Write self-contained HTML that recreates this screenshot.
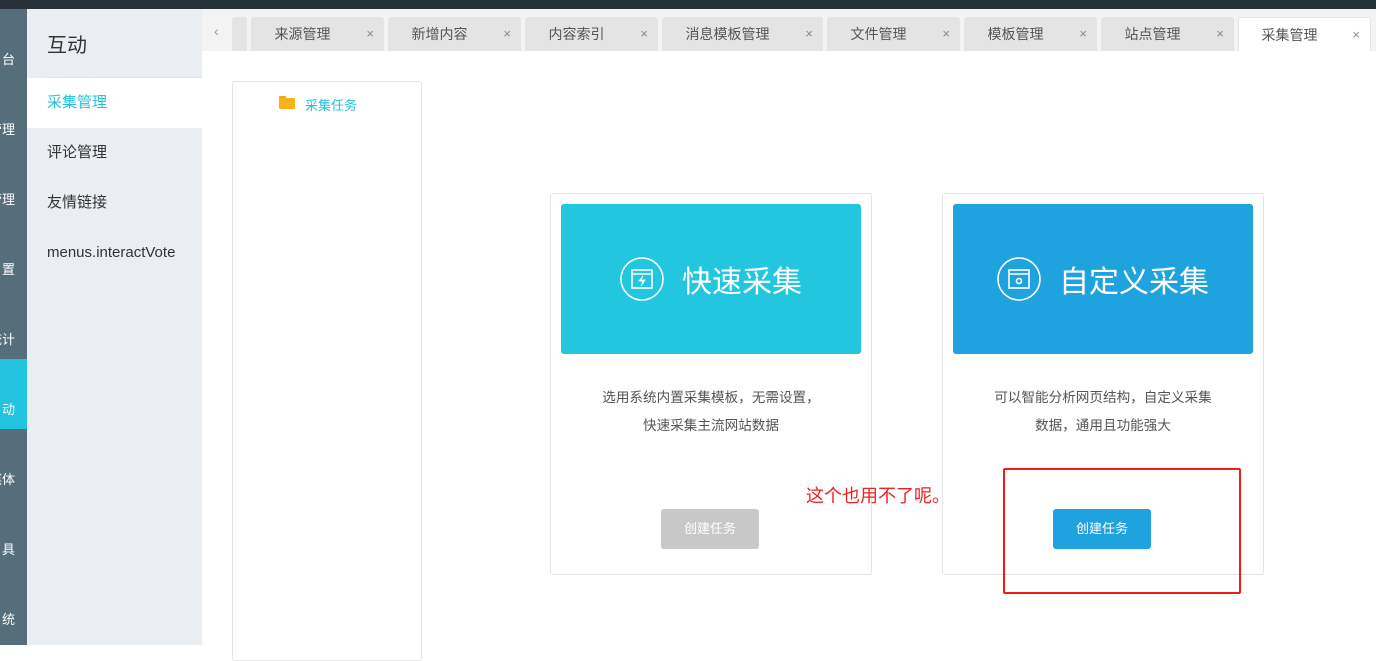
<!DOCTYPE html>
<html><head><meta charset="utf-8"><style>
*{margin:0;padding:0;box-sizing:border-box}
body{width:1376px;height:645px;overflow:hidden;background:#fff;font-family:"Liberation Sans","Noto Sans CJK SC",sans-serif;position:relative}
.a{position:absolute}
.top{left:0;top:0;width:1376px;height:9px;background:#263238}
.s1{left:0;top:9px;width:27px;height:636px;background:#546e7a;color:#fff;font-size:13px;overflow:hidden}
.s1 div{position:absolute;right:12px;white-space:nowrap}
.s2{left:27px;top:9px;width:175px;height:636px;background:#eaedf1}
.s2 .it{position:absolute;left:0;width:175px;height:50px;line-height:50px;padding-left:20px;font-size:15px;color:#333}
.tabs{left:202px;top:9px;width:1174px;height:42px;background:#f3f3f3}
.tab{position:absolute;top:8px;height:34px;background:#e4e4e4;border-radius:3px 3px 0 0;font-size:14px;color:#555;line-height:34px}
.tab span{position:absolute;left:0;right:30px;text-align:center}
.tab i{position:absolute;right:10px;font-style:normal;color:#888;font-size:13px}
.card{border:1px solid #e5e5e5;border-radius:3px;background:#fff}
.ban{position:absolute;left:10px;top:10px;width:300px;height:150px;border-radius:3px;color:#fff;font-size:30px;display:flex;align-items:center;justify-content:center}
.desc{position:absolute;left:20px;right:20px;top:190px;text-align:center;font-size:13.6px;color:#555;line-height:28px}
.btn{position:absolute;left:110px;top:315px;width:98px;height:40px;border-radius:3px;color:#fff;font-size:13px;line-height:40px;text-align:center}
</style></head><body>
<div class="a top"></div>
<div class="a s1">
<div style="top:40px">台</div><div style="top:110px">管理</div><div style="top:180px">管理</div><div style="top:250px">置</div><div style="top:320px">统计</div>
<div style="top:350px;right:0;width:27px;height:70px;background:#22c3de"></div><div style="top:390px">动</div>
<div style="top:460px">媒体</div><div style="top:530px">具</div><div style="top:600px">统</div>
</div>
<div class="a s2">
<div style="position:absolute;left:20px;top:20px;font-size:20px;color:#333">互动</div>
<div style="position:absolute;left:20px;top:68px;width:155px;height:1px;background:#dde1e5"></div>
<div class="it" style="top:69px;background:#fff;color:#22c3de">采集管理</div>
<div class="it" style="top:119px">评论管理</div>
<div class="it" style="top:169px">友情链接</div>
<div class="it" style="top:219px">menus.interactVote</div>
</div>
<div class="a tabs">
<div style="position:absolute;left:12px;top:14px;color:#999;font-size:14px">‹</div>
<div class="tab" style="left:30px;width:15px"></div>
<div class="tab" style="left:49px;width:133px"><span>来源管理</span><i>×</i></div>
<div class="tab" style="left:186px;width:133px"><span>新增内容</span><i>×</i></div>
<div class="tab" style="left:323px;width:133px"><span>内容索引</span><i>×</i></div>
<div class="tab" style="left:460px;width:161px"><span>消息模板管理</span><i>×</i></div>
<div class="tab" style="left:625px;width:133px"><span>文件管理</span><i>×</i></div>
<div class="tab" style="left:762px;width:133px"><span>模板管理</span><i>×</i></div>
<div class="tab" style="left:899px;width:133px"><span>站点管理</span><i>×</i></div>
<div class="tab" style="left:1036px;width:133px;background:#fff;border:1px solid #e5e5e5;border-bottom:0"><span>采集管理</span><i>×</i></div>
</div>
<div class="a card" style="left:232px;top:81px;width:190px;height:580px">
<div style="position:absolute;left:46px;top:14px;width:7px;height:3px;background:#f7a90f;border-radius:1px 1px 0 0"></div>
<div style="position:absolute;left:46px;top:16px;width:16px;height:11px;background:#fbb218;border-radius:1px"></div>
<div style="position:absolute;left:72px;top:13px;font-size:13px;color:#22c3de">采集任务</div>
</div>
<div class="a card" style="left:550px;top:193px;width:322px;height:382px">
<div class="ban" style="background:#22c7df">
<svg width="44" height="44" viewBox="0 0 44 44" style="margin-right:18px" fill="none" stroke="#fff" stroke-width="1.6"><circle cx="22" cy="22" r="21"/><rect x="12" y="13" width="20" height="18"/><line x1="12" y1="17" x2="32" y2="17"/><path d="M23 19l-4 5h4l-2 5 4-6h-4z" fill="#fff" stroke-width="0.8"/></svg>快速采集</div>
<div class="desc">选用系统内置采集模板，无需设置，<br>快速采集主流网站数据</div>
<div class="btn" style="background:#c8c8c8">创建任务</div>
</div>
<div class="a card" style="left:942px;top:193px;width:322px;height:382px">
<div class="ban" style="background:#1fa3de">
<svg width="44" height="44" viewBox="0 0 44 44" style="margin-right:18px" fill="none" stroke="#fff" stroke-width="1.6"><circle cx="22" cy="22" r="21"/><rect x="12" y="13" width="20" height="18"/><line x1="12" y1="17" x2="32" y2="17"/><circle cx="22" cy="24" r="2.5"/></svg>自定义采集</div>
<div class="desc">可以智能分析网页结构，自定义采集<br>数据，通用且功能强大</div>
<div class="btn" style="background:#1fa3de">创建任务</div>
</div>
<div class="a" style="left:806px;top:482px;font-size:18px;color:#f02020">这个也用不了呢。</div>
<div class="a" style="left:1003px;top:468px;width:238px;height:126px;border:2px solid #f01c1c;border-radius:2px"></div>
</body></html>
